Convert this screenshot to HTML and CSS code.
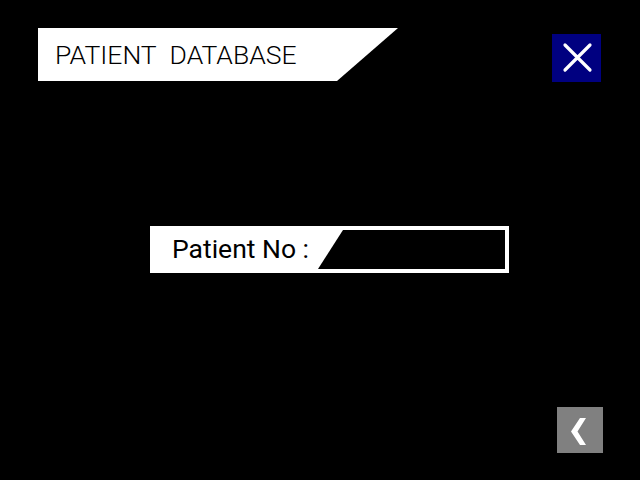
FILE: index.html
```html
<!DOCTYPE html>
<html>
<head>
<meta charset="utf-8">
<link rel="stylesheet" href="styles.css">
</head>
<body>
<div class="screen">
  <div class="top">
    <div class="title">PATIENT&nbsp; DATABASE</div>
    <button class="close" aria-label="Close">
      <svg width="49" height="48" viewBox="0 0 49 48"><path d="M13 11 L38 36 M38 11 L13 36" stroke="#fff" stroke-width="3.2" stroke-linecap="round" fill="none"/></svg>
    </button>
  </div>
  <div class="middle">
    <div class="field">
      <span class="label">Patient No :</span>
      <div class="input"></div>
    </div>
  </div>
  <div class="bottom">
    <button class="back" aria-label="Back">
      <svg width="46" height="46" viewBox="0 0 46 46"><polygon points="23,11 29,11 20.5,24.5 29,38 23,38 14,24.5" fill="#fff"/></svg>
    </button>
  </div>
</div>
</body>
</html>
```
FILE: styles.css
```css
html, body {
  margin: 0;
  padding: 0;
  background: #000;
}
.screen {
  width: 640px;
  height: 480px;
  display: flex;
  flex-direction: column;
  font-family: Roboto, "Liberation Sans", sans-serif;
}
.top {
  display: flex;
  justify-content: space-between;
  align-items: flex-start;
  padding: 28px 39px 0 38px;
}
.title {
  width: 360px;
  height: 53px;
  box-sizing: border-box;
  background: #fff;
  clip-path: polygon(0 0, 100% 0, calc(100% - 61px) 100%, 0 100%);
  color: #000;
  font-weight: 300;
  font-size: 26.5px;
  line-height: 53px;
  padding-left: 17px;
}
.close {
  margin-top: 6px;
  width: 49px;
  height: 48px;
  background: #000080;
  border: none;
  padding: 0;
  display: block;
}
.close svg, .back svg { display: block; }
.middle {
  padding-top: 144px;
  padding-left: 150px;
}
.field {
  width: 359px;
  height: 47px;
  box-sizing: border-box;
  background: #fff;
  padding: 4px 4px 4px 22px;
  display: flex;
  align-items: stretch;
}
.label {
  color: #000;
  font-size: 26.5px;
  line-height: 37px;
  width: 146px;
  flex: none;
}
.input {
  flex: 1;
  background: #000;
  clip-path: polygon(25px 0, 100% 0, 100% 100%, 0 100%);
}
.bottom {
  margin-top: auto;
  display: flex;
  justify-content: flex-end;
  padding: 0 37px 27px 0;
}
.back {
  width: 46px;
  height: 46px;
  background: #808080;
  border: none;
  padding: 0;
  display: block;
}
```
